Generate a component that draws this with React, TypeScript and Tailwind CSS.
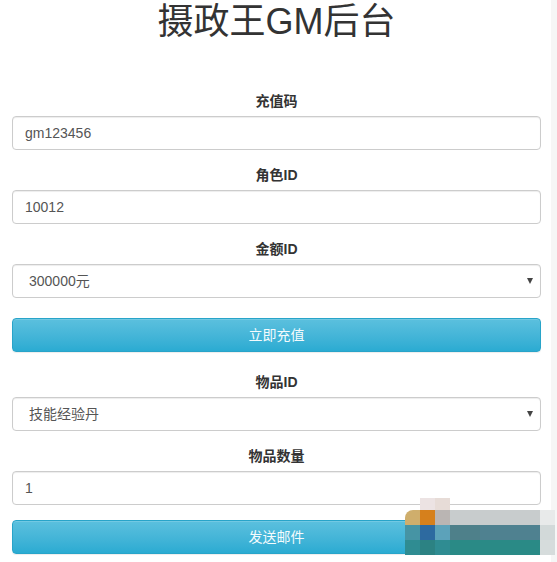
import React from "react";

const font = { fontFamily: '"Liberation Sans", "Noto Sans CJK SC", sans-serif' };

function Label({ children }: { children: React.ReactNode }) {
  return (
    <div className="text-center text-[14px] font-bold leading-[20px] text-[#333] mb-[5px]">
      {children}
    </div>
  );
}

function Input({ value }: { value: string }) {
  return (
    <input
      readOnly
      value={value}
      className="block w-full h-[34px] px-[12px] border border-[#ccc] rounded-[4px] bg-white text-[14px] text-[#555] shadow-[inset_0_1px_1px_rgba(0,0,0,0.075)] outline-none"
    />
  );
}

function Select({ value }: { value: string }) {
  return (
    <div className="relative">
      <select
        value={value}
        onChange={() => {}}
        className="block w-full h-[34px] pl-[16px] pr-[24px] border border-[#ccc] rounded-[4px] bg-white text-[14px] text-[#555] shadow-[inset_0_1px_1px_rgba(0,0,0,0.075)] outline-none appearance-none"
      >
        <option value={value}>{value}</option>
      </select>
      <span className="pointer-events-none absolute right-[8px] top-[14px] w-0 h-0 border-l-[3px] border-r-[3px] border-t-[6px] border-l-transparent border-r-transparent border-t-[#444]" />
    </div>
  );
}

function Button({ children }: { children: React.ReactNode }) {
  return (
    <button className="block w-full h-[34px] rounded-[4px] border border-[#28a4c9] bg-gradient-to-b from-[#5bc0de] to-[#2aabd2] text-[#f4fbfd] text-[14px] shadow-[inset_0_1px_0_rgba(255,255,255,0.15),0_1px_1px_rgba(0,0,0,0.075)]">
      {children}
    </button>
  );
}

const mosaic: { x: number; y: number; w: number; h: number; c: string; r?: boolean }[] = [
  { x: 420, y: 498, w: 15, h: 12, c: "#ece3e3" },
  { x: 435, y: 498, w: 15, h: 12, c: "#e7dcd7" },
  { x: 405, y: 510, w: 15, h: 15, c: "#cfae6c", r: true },
  { x: 420, y: 510, w: 15, h: 15, c: "#d6801c" },
  { x: 435, y: 510, w: 15, h: 15, c: "#bab5b3" },
  { x: 450, y: 510, w: 90, h: 15, c: "#c8cccd" },
  { x: 540, y: 510, w: 15, h: 15, c: "#e8eaea" },
  { x: 405, y: 525, w: 15, h: 15, c: "#4694a4" },
  { x: 420, y: 525, w: 15, h: 15, c: "#2d6aa0" },
  { x: 435, y: 525, w: 15, h: 15, c: "#5ca2ba" },
  { x: 450, y: 525, w: 30, h: 15, c: "#4e808a" },
  { x: 480, y: 525, w: 60, h: 15, c: "#4f8190" },
  { x: 540, y: 525, w: 15, h: 15, c: "#d2d9d9" },
  { x: 405, y: 540, w: 15, h: 15, c: "#2f8c92" },
  { x: 420, y: 540, w: 15, h: 15, c: "#2c8283" },
  { x: 435, y: 540, w: 15, h: 15, c: "#2f8c92" },
  { x: 450, y: 540, w: 90, h: 15, c: "#2a8a86" },
  { x: 540, y: 540, w: 15, h: 15, c: "#d6dcdc" },
];

export default function App() {
  return (
    <div className="relative w-[557px] h-[562px] bg-white overflow-hidden flex" style={font}>
      <div className="flex-1 pl-[12px] pr-[10px]">
        <h1 className="text-center text-[36px] leading-[44px] font-normal text-[#333] m-0">
          摄政王GM后台
        </h1>
        <div className="mt-[47px]">
          <Label>充值码</Label>
          <Input value="gm123456" />
        </div>
        <div className="mt-[15px]">
          <Label>角色ID</Label>
          <Input value="10012" />
        </div>
        <div className="mt-[15px]">
          <Label>金额ID</Label>
          <Select value="300000元" />
        </div>
        <div className="mt-[20px]">
          <Button>立即充值</Button>
        </div>
        <div className="mt-[20px]">
          <Label>物品ID</Label>
          <Select value="技能经验丹" />
        </div>
        <div className="mt-[15px]">
          <Label>物品数量</Label>
          <Input value="1" />
        </div>
        <div className="mt-[15px]">
          <Button>发送邮件</Button>
        </div>
      </div>
      <div className="w-[6px] bg-[#f6f6f6]" />
      {mosaic.map((m, i) => (
        <div
          key={i}
          className={m.r ? "absolute rounded-tl-[8px]" : "absolute"}
          style={{ left: m.x, top: m.y, width: m.w, height: m.h, background: m.c }}
        />
      ))}
    </div>
  );
}
